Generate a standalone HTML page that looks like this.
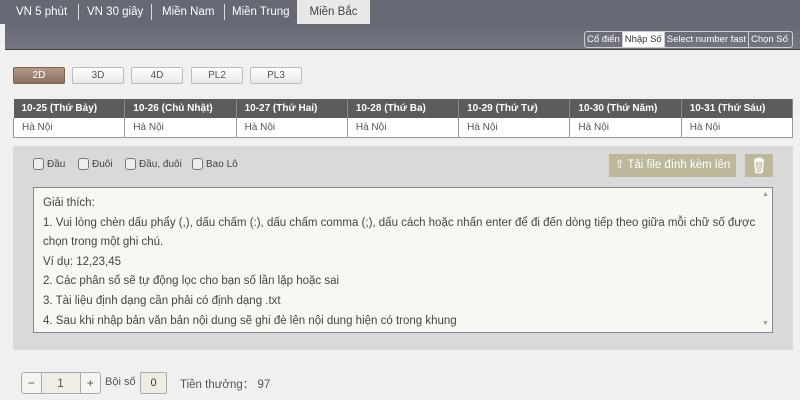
<!DOCTYPE html>
<html><head><meta charset="utf-8"><style>
*{margin:0;padding:0;box-sizing:border-box}
body{width:800px;height:400px;background:#f0f0f0;font-family:"Liberation Sans",Arial,sans-serif;position:relative;overflow:hidden;font-size:11px;color:#333}
.a{position:absolute}
.tabs{left:0;top:0;width:800px;height:24px;background:#666873}
.tab{position:absolute;top:0;height:24px;line-height:24px;color:#fff;font-size:11.5px;white-space:nowrap}
.sep{position:absolute;top:4px;width:1px;height:16px;background:#ddd}
.band{left:5px;top:24px;width:795px;height:26px;background:linear-gradient(#666873,#747681);border-bottom:1px solid #444}
.mb{top:31px;height:17px;border:1px solid #ccc;border-radius:3px;display:flex;font-size:9.5px;line-height:15px;color:#fff;overflow:hidden;white-space:nowrap}
.mb span{padding:0 2px;border-right:1px solid #ccc}
.btn{top:67px;height:17px;width:52px;border:1px solid #bbb;border-radius:2px;background:linear-gradient(#fff,#e8e8e8);text-align:center;line-height:15px;font-size:10px;color:#555}
table{position:absolute;left:13px;top:99px;width:780px;border-collapse:collapse;font-size:10px;table-layout:fixed}
th{background:#5c5c5c;color:#fff;height:19px;text-align:left;padding-left:8px;font-weight:bold;border-right:1px solid #888;white-space:nowrap;overflow:hidden}
td{background:#fff;height:19px;padding-left:8px;color:#555;border:1px solid #999;border-top:none}
.panel{left:13px;top:146px;width:780px;height:204px;background:#d9d9d9}
.cb{top:158px;font-size:10px;color:#444;display:flex;align-items:center}
.cb i{display:inline-block;width:11px;height:12px;border:1px solid #777;border-radius:3px;margin-right:3px;background:#eee}
.ta{left:33px;top:187px;width:740px;height:146px;background:#f8f7f2;border:1px solid #888;padding:6px 9px;font-size:11.5px;line-height:19.6px;color:#444}
</style></head><body>
<div class="a tabs">
<div class="tab" style="left:16px">VN 5 phút</div><div class="sep" style="left:78px"></div>
<div class="tab" style="left:87px">VN 30 giây</div><div class="sep" style="left:151px"></div>
<div class="tab" style="left:162px">Miền Nam</div><div class="sep" style="left:224px"></div>
<div class="tab" style="left:232px">Miền Trung</div>
<div class="tab" style="left:297px;width:73px;background:#e8e8e8;color:#444;text-align:center">Miền Bắc</div>
</div>
<div class="a band"></div>
<div class="a mb" style="left:584px;width:209px"><span>Cổ điển</span><span style="background:#fff;color:#333">Nhập Số</span><span>Select number fast</span><span style="border:none">Chọn Số</span></div>
<div class="a btn" style="left:13px;background:linear-gradient(#b49a86,#8a7060);color:#fff;border-color:#7a6555">2D</div>
<div class="a btn" style="left:72px">3D</div>
<div class="a btn" style="left:131px">4D</div>
<div class="a btn" style="left:191px">PL2</div>
<div class="a btn" style="left:250px">PL3</div>
<table><tr><th>10-25 (Thứ Bảy)</th><th>10-26 (Chủ Nhật)</th><th>10-27 (Thứ Hai)</th><th>10-28 (Thứ Ba)</th><th>10-29 (Thứ Tư)</th><th>10-30 (Thứ Năm)</th><th>10-31 (Thứ Sáu)</th></tr>
<tr><td>Hà Nội</td><td>Hà Nội</td><td>Hà Nội</td><td>Hà Nội</td><td>Hà Nội</td><td>Hà Nội</td><td>Hà Nội</td></tr></table>
<div class="a panel"></div>
<div class="a cb" style="left:33px"><i></i>Đầu</div>
<div class="a cb" style="left:78px"><i></i>Đuôi</div>
<div class="a cb" style="left:125px"><i></i>Đầu, đuôi</div>
<div class="a cb" style="left:192px"><i></i>Bao Lô</div>
<div class="a" style="left:609px;top:154px;width:127px;height:23px;background:#bdb89a;color:#fff;font-size:11.5px;line-height:23px;text-align:center;white-space:nowrap">⇧ Tải file đính kèm lên</div>
<div class="a" style="left:745px;top:154px;width:28px;height:23px;background:#bdb89a">
<svg width="28" height="23" viewBox="0 0 28 23"><path d="M9 6h10M12 6V4.5h4V6M10 7.5l1 11h6l1-11z" fill="none" stroke="#fff" stroke-width="1.6"/><path d="M13 9v8M15 9v8" stroke="#fff" stroke-width="1"/></svg></div>
<div class="a ta">Giải thích:<br>1. Vui lòng chèn dấu phẩy (,), dấu chấm (:), dấu chấm comma (;), dấu cách hoặc nhấn enter để đi đến dòng tiếp theo giữa mỗi chữ số được chọn trong một ghi chú.<br>Ví dụ: 12,23,45<br>2. Các phân số sẽ tự động lọc cho bạn số lần lặp hoặc sai<br>3. Tài liệu định dạng cần phải có định dạng .txt<br>4. Sau khi nhập bản văn bản nội dung sẽ ghi đè lên nội dung hiện có trong khung</div>
<div class="a" style="left:762px;top:191px;font-size:7px;color:#999">▲</div>
<div class="a" style="left:762px;top:320px;font-size:7px;color:#999">▼</div>
<div class="a" style="left:21px;top:372px;width:80px;height:22px;border:1px solid #aaa;border-radius:3px;background:#f5f4ee;display:flex;font-size:12px;line-height:20px;text-align:center;color:#555">
<span style="width:20px;border-right:1px solid #aaa">−</span><span style="width:40px;border-right:1px solid #aaa;background:#f0eee4">1</span><span style="width:20px">+</span></div>
<div class="a" style="left:105px;top:376px;font-size:11px;color:#555">Bội số</div>
<div class="a" style="left:140px;top:372px;width:27px;height:22px;border:1px solid #aaa;border-radius:2px;background:#eeece2;text-align:center;line-height:20px;font-size:11px">0</div>
<div class="a" style="left:180px;top:376px;font-size:11.5px;color:#555">Tiền thưởng： 97</div>
</body></html>
